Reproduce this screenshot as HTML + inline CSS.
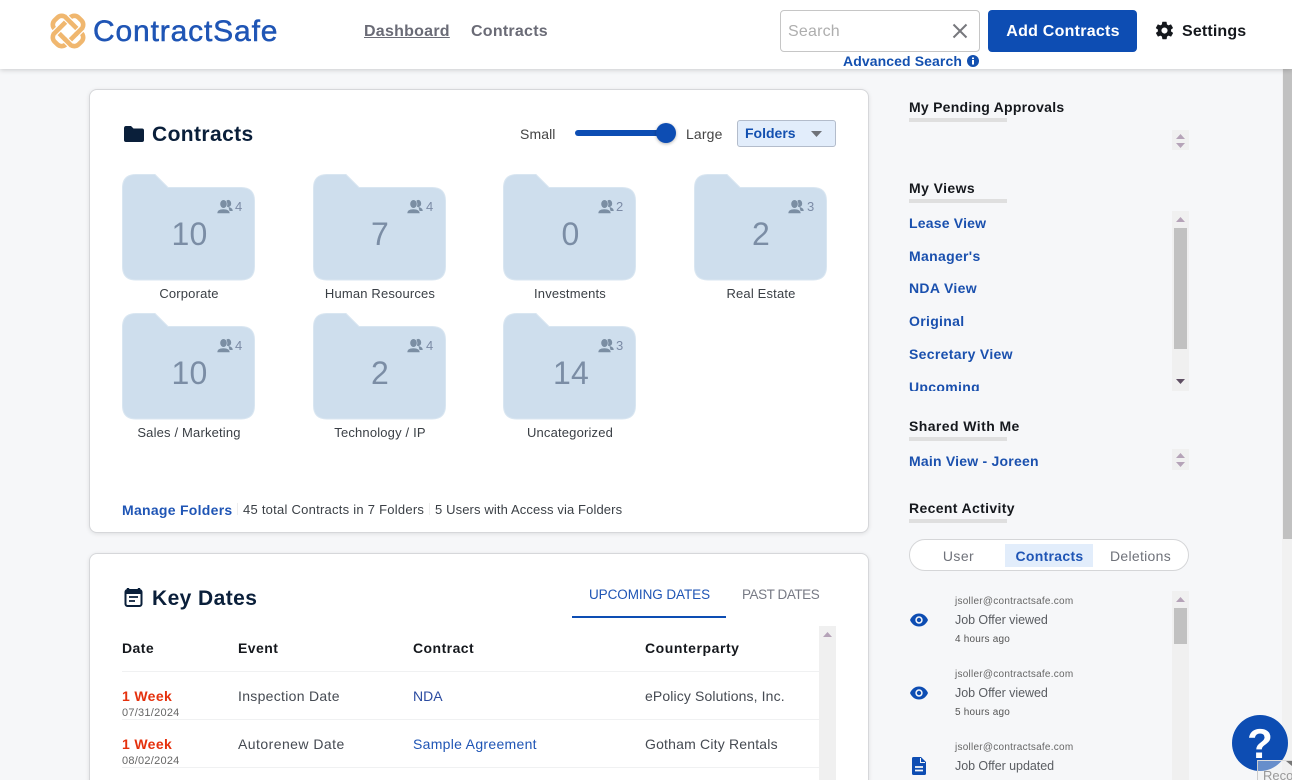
<!DOCTYPE html>
<html><head><meta charset="utf-8"><title>ContractSafe</title>
<style>
*{box-sizing:border-box}
html,body{margin:0;padding:0;width:1292px;height:780px;overflow:hidden;background:#f6f7f9;font-family:"Liberation Sans",sans-serif;color:#333}
#w{position:relative;width:1292px;height:780px;overflow:hidden}
.a,.t{position:absolute}
.t{white-space:nowrap;line-height:20px;height:20px}
.b{font-weight:bold}
.c{transform:translateX(-50%)}
.h{font-size:14px;font-weight:bold;color:#15181d;letter-spacing:.42px}
.u{position:absolute;left:909px;width:98px;height:4px;background:#dfdfdf}
.l{font-size:14px;font-weight:bold;color:#1a50ae;letter-spacing:.32px;left:909px}
.card{position:absolute;left:89px;width:780px;background:#fff;border:1px solid #d6d7da;border-radius:8px;box-shadow:0 1px 4px rgba(0,0,0,.1)}
.num{font-size:32px;color:#7b8da5;line-height:36px;height:36px;letter-spacing:.2px}
.cnt{font-size:13px;color:#7c8ba6}
.lab{font-size:13px;color:#3a3f45;letter-spacing:.17px}
.tr{position:absolute;background:#f0f0f0}
.line{position:absolute;left:122px;width:697px;height:1px;background:#f0f1f2}
.th{font-size:14px;font-weight:bold;color:#15181d;letter-spacing:.45px}
.td{font-size:14px;color:#454a52;letter-spacing:.3px}
.wk{font-size:14px;font-weight:bold;color:#e5310d;letter-spacing:.35px;left:122px}
.dt{font-size:11px;color:#666;letter-spacing:.25px;left:122px}
.em{font-size:10px;color:#666;left:955px;letter-spacing:.25px}
.jo{font-size:12.5px;color:#5a5d62;left:955px;letter-spacing:-.05px}
.ag{font-size:10px;color:#555;left:955px;letter-spacing:.2px}
</style></head><body><div id="w">

<!-- header -->
<div class="a" style="left:0;top:0;width:1292px;height:69px;background:#fff;box-shadow:0 1px 5px rgba(0,0,0,.18);z-index:2">
<svg class="a" style="left:48.500px;top:11.500px" width="38" height="38" viewBox="0 0 38 38" fill="none" stroke="#f0b76f" stroke-width="4.600">
<rect x="2" y="11" width="34" height="16" rx="6" transform="rotate(45 19 19)"/>
<rect x="2" y="11" width="34" height="16" rx="6" transform="rotate(-45 19 19)"/>
<path d="M16 4.700 22 10.700M16 27.300 22 33.300M4.700 22 10.700 16M27.300 22 33.300 16" stroke="#fff" stroke-width="7"/>
<path d="M15.500 4.200 22.500 11.200M15.500 26.800 22.500 33.800M4.200 22.500 11.200 15.500M26.800 22.500 33.800 15.500" stroke="#f0b76f" stroke-width="4.600"/>
</svg>
<div class="t" style="left:93px;top:13px;height:38px;line-height:38px;font-size:30px;color:#1f55b5;letter-spacing:.85px;-webkit-text-stroke:.5px #1f55b5">ContractSafe</div>
<div class="t b" style="left:364px;top:22px;font-size:16px;color:#6a6b76;text-decoration:underline;letter-spacing:.25px">Dashboard</div>
<div class="t b" style="left:471px;top:22px;font-size:16px;color:#6a6b76;letter-spacing:.25px">Contracts</div>
<div class="a" style="left:780px;top:10px;width:200px;height:42px;border:1px solid #c6c6c6;border-radius:4px"></div>
<div class="t" style="left:788px;top:22px;font-size:16px;color:#aeaeae;letter-spacing:.2px">Search</div>
<svg class="a" style="left:952px;top:23px" width="16" height="16" viewBox="0 0 16 16" stroke="#77787d" stroke-width="2" fill="none"><path d="M1.500 1.500 14.500 14.500M14.500 1.500 1.500 14.500"/></svg>
<div class="a" style="left:988px;top:10px;width:149px;height:42px;background:#0d4db3;border-radius:4px"></div>
<div class="t b c" style="left:1063px;top:22px;font-size:16px;color:#fff;letter-spacing:.25px">Add Contracts</div>
<svg class="a" style="left:1154px;top:20px" width="21" height="21" viewBox="0 0 24 24" fill="#15181d"><path d="M19.400 13c.1-.3.1-.7.1-1s0-.7-.1-1l2.100-1.600c.2-.2.200-.4.100-.6l-2-3.500c-.1-.2-.4-.3-.6-.2l-2.500 1c-.5-.4-1.100-.7-1.700-1L14.400 2.400c0-.2-.2-.4-.5-.4h-4c-.2 0-.4.200-.5.400L9 5.100c-.6.300-1.200.6-1.700 1l-2.500-1c-.2-.1-.5 0-.6.200l-2 3.500c-.1.200-.1.400.1.6L4.500 11c0 .3-.1.700-.1 1s0 .7.100 1l-2.100 1.600c-.2.200-.2.400-.1.600l2 3.500c.1.200.4.300.6.200l2.500-1c.5.400 1.100.7 1.700 1l.4 2.700c0 .2.200.4.500.4h4c.2 0 .4-.2.500-.4l.4-2.700c.6-.3 1.200-.6 1.700-1l2.500 1c.2.100.5 0 .6-.2l2-3.500c.1-.2.100-.4-.1-.6zM12 15.500a3.500 3.500 0 1 1 0-7 3.500 3.500 0 0 1 0 7z"/></svg>
<div class="t b" style="left:1182px;top:22px;font-size:16px;color:#15181d;letter-spacing:.15px">Settings</div>
<div class="t b" style="left:843px;top:51px;font-size:14px;color:#1350b0;letter-spacing:.1px">Advanced Search</div>
<svg class="a" style="left:967px;top:55px" width="12" height="12" viewBox="0 0 12 12"><circle cx="6" cy="6" r="6" fill="#1350b0"/><rect x="5" y="5" width="2" height="4.500" fill="#fff"/><rect x="5" y="2.500" width="2" height="1.600" fill="#fff"/></svg>
</div>

<!-- page scrollbar -->
<div class="a" style="left:1282px;top:69px;width:10px;height:711px;background:#f1f1f1"></div>
<div class="a" style="left:1283px;top:69px;width:9px;height:470px;background:#c1c1c1"></div>

<!-- cards -->
<div class="card" style="top:89px;height:444px"></div>
<div class="card" style="top:553px;height:260px"></div>

<svg class="a" style="left:123px;top:125px" width="22" height="18" viewBox="0 0 22 18"><path d="M1 3.500Q1 1 3 1H8L10.500 3.500H19Q21 3.500 21 5.500V15Q21 17 19 17H3Q1 17 1 15Z" fill="#0a1f3a"/></svg>
<div class="t b" style="left:152px;top:125px;font-size:21px;color:#0a1f3a;letter-spacing:.4px">Contracts</div>
<div class="t" style="left:520px;top:124px;font-size:14px;color:#444;letter-spacing:.1px">Small</div>
<div class="a" style="left:575px;top:130px;width:92px;height:6px;border-radius:3px;background:#0d4db3"></div>
<div class="a" style="left:656px;top:123px;width:20px;height:20px;border-radius:50%;background:#0d4db3;box-shadow:0 1px 3px rgba(0,0,0,.3)"></div>
<div class="t" style="left:686px;top:124px;font-size:14px;color:#444;letter-spacing:.15px">Large</div>
<div class="a" style="left:737px;top:120px;width:99px;height:27px;background:#e2edfb;border:1px solid #b3bccb;border-radius:3px"></div>
<div class="t b" style="left:745px;top:123px;font-size:14px;color:#1350b0;letter-spacing:0">Folders</div>
<svg class="a" style="left:811px;top:131px" width="11" height="6"><path d="M0 0H11L5.500 6Z" fill="#6f7278"/></svg>

<!-- folders -->
<svg width="0" height="0" style="position:absolute"><defs>
<path id="f" d="M.5 14Q.5 .5 14 .5H33L46 13.500H119Q132.500 13.500 132.500 27V92.500Q132.500 106 119 106H14Q.5 106 .5 92.500Z" fill="#cedeed" stroke="#d9e6f1"/>
<g id="p" fill="#7b8ea3">
<ellipse cx="11.300" cy="4.500" rx="2.900" ry="3.600"/>
<path d="M11.500 8C13.800 8.500 15.700 9.500 15.700 12H12.500Z"/>
<ellipse cx="6.500" cy="5" rx="3.600" ry="4.300" stroke="#cedeed" stroke-width=".6"/>
<path d="M0 14.500C0 11 3 10 6.500 10S13 11 13 14.500Z" stroke="#cedeed" stroke-width=".6"/>
</g>
</defs></svg>

<svg class="a" style="left:122px;top:174px" width="134" height="107"><use href="#f"/></svg>
<svg class="a" style="left:217px;top:199px" width="16" height="16"><use href="#p"/></svg>
<div class="t cnt" style="left:235px;top:197px">4</div>
<div class="t num c" style="left:189.500px;top:216px">10</div>
<div class="t lab c" style="left:189px;top:284px">Corporate</div>

<svg class="a" style="left:313px;top:174px" width="134" height="107"><use href="#f"/></svg>
<svg class="a" style="left:407px;top:199px" width="16" height="16"><use href="#p"/></svg>
<div class="t cnt" style="left:426px;top:197px">4</div>
<div class="t num c" style="left:380px;top:216px">7</div>
<div class="t lab c" style="left:380px;top:284px">Human Resources</div>

<svg class="a" style="left:503px;top:174px" width="134" height="107"><use href="#f"/></svg>
<svg class="a" style="left:598px;top:199px" width="16" height="16"><use href="#p"/></svg>
<div class="t cnt" style="left:616px;top:197px">2</div>
<div class="t num c" style="left:570.500px;top:216px">0</div>
<div class="t lab c" style="left:570px;top:284px">Investments</div>

<svg class="a" style="left:694px;top:174px" width="134" height="107"><use href="#f"/></svg>
<svg class="a" style="left:788px;top:199px" width="16" height="16"><use href="#p"/></svg>
<div class="t cnt" style="left:807px;top:197px">3</div>
<div class="t num c" style="left:761px;top:216px">2</div>
<div class="t lab c" style="left:761px;top:284px">Real Estate</div>

<svg class="a" style="left:122px;top:313px" width="134" height="107"><use href="#f"/></svg>
<svg class="a" style="left:217px;top:338px" width="16" height="16"><use href="#p"/></svg>
<div class="t cnt" style="left:235px;top:336px">4</div>
<div class="t num c" style="left:189.500px;top:355px">10</div>
<div class="t lab c" style="left:189px;top:423px">Sales / Marketing</div>

<svg class="a" style="left:313px;top:313px" width="134" height="107"><use href="#f"/></svg>
<svg class="a" style="left:407px;top:338px" width="16" height="16"><use href="#p"/></svg>
<div class="t cnt" style="left:426px;top:336px">4</div>
<div class="t num c" style="left:380px;top:355px">2</div>
<div class="t lab c" style="left:380px;top:423px">Technology / IP</div>

<svg class="a" style="left:503px;top:313px" width="134" height="107"><use href="#f"/></svg>
<svg class="a" style="left:598px;top:338px" width="16" height="16"><use href="#p"/></svg>
<div class="t cnt" style="left:616px;top:336px">3</div>
<div class="t num c" style="left:571px;top:355px">14</div>
<div class="t lab c" style="left:570px;top:423px">Uncategorized</div>

<!-- card footer -->
<div class="t b" style="left:122px;top:500px;font-size:14px;color:#1f55b5;letter-spacing:.28px">Manage Folders</div>
<div class="a" style="left:237px;top:503px;width:1px;height:12px;background:#eee"></div>
<div class="t" style="left:243px;top:500px;font-size:13px;color:#3a3f45;letter-spacing:.25px">45 total Contracts in 7 Folders</div>
<div class="a" style="left:429px;top:503px;width:1px;height:12px;background:#eee"></div>
<div class="t" style="left:435px;top:500px;font-size:13px;color:#3a3f45;letter-spacing:.12px">5 Users with Access via Folders</div>

<!-- key dates -->
<svg class="a" style="left:124px;top:587px" width="20" height="21" viewBox="0 0 20 21"><path d="M4 1V3M15 1V3" stroke="#0a1f3a" stroke-width="2.400"/><rect x="1.500" y="3" width="16" height="16" rx="2" fill="none" stroke="#0a1f3a" stroke-width="2"/><rect x="1.500" y="3" width="16" height="4" fill="#0a1f3a"/><path d="M5 10H14M5 14H11" stroke="#0a1f3a" stroke-width="1.800"/></svg>
<div class="t b" style="left:152px;top:589px;font-size:21px;color:#0a1f3a;letter-spacing:.42px">Key Dates</div>
<div class="t" style="left:589px;top:585px;font-size:13.500px;color:#1f55b5;letter-spacing:-.07px">UPCOMING DATES</div>
<div class="a" style="left:572px;top:616px;width:154px;height:2px;background:#0d4db3"></div>
<div class="t" style="left:742px;top:585px;font-size:13.500px;color:#777a85;letter-spacing:-.45px">PAST DATES</div>

<div class="t th" style="left:122px;top:638px">Date</div>
<div class="t th" style="left:238px;top:638px">Event</div>
<div class="t th" style="left:413px;top:638px">Contract</div>
<div class="t th" style="left:645px;top:638px;letter-spacing:.55px">Counterparty</div>
<div class="line" style="top:671px"></div>
<div class="t wk" style="top:686px">1 Week</div>
<div class="t dt" style="top:703px">07/31/2024</div>
<div class="t td" style="left:238px;top:686px">Inspection Date</div>
<div class="t td" style="left:413px;top:686px;color:#2b4ba0;letter-spacing:0">NDA</div>
<div class="t td" style="left:645px;top:686px;letter-spacing:.12px">ePolicy Solutions, Inc.</div>
<div class="line" style="top:719px"></div>
<div class="t wk" style="top:734px">1 Week</div>
<div class="t dt" style="top:751px">08/02/2024</div>
<div class="t td" style="left:238px;top:734px;letter-spacing:.45px">Autorenew Date</div>
<div class="t td" style="left:413px;top:734px;color:#1f55b5">Sample Agreement</div>
<div class="t td" style="left:645px;top:734px;letter-spacing:.19px">Gotham City Rentals</div>
<div class="line" style="top:767px"></div>
<div class="tr" style="left:819px;top:626px;width:17px;height:154px"></div>
<svg class="a" style="left:823px;top:632px" width="9" height="5"><path d="M0 5H9L4.500 0Z" fill="#b5a3b8"/></svg>

<!-- sidebar -->
<div class="t h" style="left:909px;top:97px;letter-spacing:.25px">My Pending Approvals</div>
<div class="u" style="top:118px"></div>
<div class="tr" style="left:1172px;top:130px;width:17px;height:20px"></div>
<svg class="a" style="left:1176px;top:134px" width="9" height="14"><path d="M0 5H9L4.500 0ZM0 9H9L4.500 14Z" fill="#b5a3b8"/></svg>

<div class="t h" style="left:909px;top:178px">My Views</div>
<div class="u" style="top:199px"></div>
<div class="a" style="left:0;top:211px;width:1172px;height:180px;overflow:hidden">
<div class="t l" style="top:2px;letter-spacing:.2px">Lease View</div>
<div class="t l" style="top:35px">Manager's</div>
<div class="t l" style="top:67px">NDA View</div>
<div class="t l" style="top:100px">Original</div>
<div class="t l" style="top:133px">Secretary View</div>
<div class="t l" style="top:166px">Upcoming</div>
</div>
<div class="tr" style="left:1172px;top:211px;width:17px;height:180px"></div>
<div class="a" style="left:1174px;top:228px;width:13px;height:121px;background:#c1c1c1"></div>
<svg class="a" style="left:1176px;top:217px" width="9" height="5"><path d="M0 5H9L4.500 0Z" fill="#b5a3b8"/></svg>
<svg class="a" style="left:1176px;top:379px" width="9" height="5"><path d="M0 0H9L4.500 5Z" fill="#5f4f63"/></svg>

<div class="t h" style="left:909px;top:416px">Shared With Me</div>
<div class="u" style="top:437px"></div>
<div class="t l" style="top:451px;letter-spacing:.22px">Main View - Joreen</div>
<div class="tr" style="left:1172px;top:449px;width:17px;height:21px"></div>
<svg class="a" style="left:1176px;top:453px" width="9" height="14"><path d="M0 5H9L4.500 0ZM0 9H9L4.500 14Z" fill="#b5a3b8"/></svg>

<div class="t h" style="left:909px;top:498px;letter-spacing:.35px">Recent Activity</div>
<div class="u" style="top:519px"></div>

<div class="a" style="left:909px;top:539px;width:280px;height:32px;background:#fff;border:1px solid #d5d6d8;border-radius:16px"></div>
<div class="a" style="left:1005px;top:544px;width:88px;height:23px;background:#e2edfb"></div>
<div class="t c" style="left:958.500px;top:546px;font-size:14px;color:#6f727a;letter-spacing:.4px">User</div>
<div class="t b c" style="left:1049.500px;top:546px;font-size:14px;color:#1f55b5;letter-spacing:.3px">Contracts</div>
<div class="t c" style="left:1140.500px;top:546px;font-size:14px;color:#6f727a;letter-spacing:.3px">Deletions</div>

<svg class="a" style="left:910px;top:613px" width="18" height="14" viewBox="0 0 18 14"><path d="M0 7C2 2.500 5.300 .5 9 .5S16 2.500 18 7C16 11.500 12.700 13.500 9 13.500S2 11.500 0 7Z" fill="#0d4db3"/><circle cx="9" cy="7" r="3.700" fill="#f6f7f9"/><circle cx="9" cy="7" r="2.200" fill="#0d4db3"/></svg>
<div class="t em" style="top:592px">jsoller@contractsafe.com</div>
<div class="t jo" style="top:610px">Job Offer viewed</div>
<div class="t ag" style="top:630px">4 hours ago</div>

<svg class="a" style="left:910px;top:686px" width="18" height="14" viewBox="0 0 18 14"><path d="M0 7C2 2.500 5.300 .5 9 .5S16 2.500 18 7C16 11.500 12.700 13.500 9 13.500S2 11.500 0 7Z" fill="#0d4db3"/><circle cx="9" cy="7" r="3.700" fill="#f6f7f9"/><circle cx="9" cy="7" r="2.200" fill="#0d4db3"/></svg>
<div class="t em" style="top:665px">jsoller@contractsafe.com</div>
<div class="t jo" style="top:683px">Job Offer viewed</div>
<div class="t ag" style="top:703px">5 hours ago</div>

<svg class="a" style="left:912px;top:757px" width="14" height="18" viewBox="0 0 14 18"><path d="M1.500 0H9L14 5V16.500Q14 18 12.500 18H1.500Q0 18 0 16.500V1.500Q0 0 1.500 0Z" fill="#0d4db3"/><path d="M8.500 1V5.500H13" fill="none" stroke="#f6f7f9" stroke-width="1"/><path d="M3 10H11M3 13.500H11" stroke="#f6f7f9" stroke-width="1.700"/></svg>
<div class="t em" style="top:738px">jsoller@contractsafe.com</div>
<div class="t jo" style="top:756px">Job Offer updated</div>

<div class="tr" style="left:1172px;top:591px;width:17px;height:189px"></div>
<div class="a" style="left:1174px;top:608px;width:13px;height:36px;background:#c1c1c1"></div>
<svg class="a" style="left:1176px;top:597px" width="9" height="5"><path d="M0 5H9L4.500 0Z" fill="#b5a3b8"/></svg>

<!-- help -->
<div class="a" style="left:1232px;top:715px;width:56px;height:56px;border-radius:50%;background:#0d4db3"></div>
<div class="t b c" style="left:1260px;top:723px;height:42px;line-height:42px;font-size:42px;color:#fff">?</div>
<div class="a" style="left:1257px;top:760px;width:35px;height:20px;background:rgba(240,240,240,.4);border-left:1px solid #ccc;border-top:1px solid #ddd;overflow:hidden">
<div class="t" style="left:5px;top:5px;font-size:13px;color:#999">Recording</div>
</div>
<svg class="a" style="left:1286px;top:761px" width="6" height="5"><path d="M0 0H6V5Z" fill="#777"/></svg>
</div></body></html>
